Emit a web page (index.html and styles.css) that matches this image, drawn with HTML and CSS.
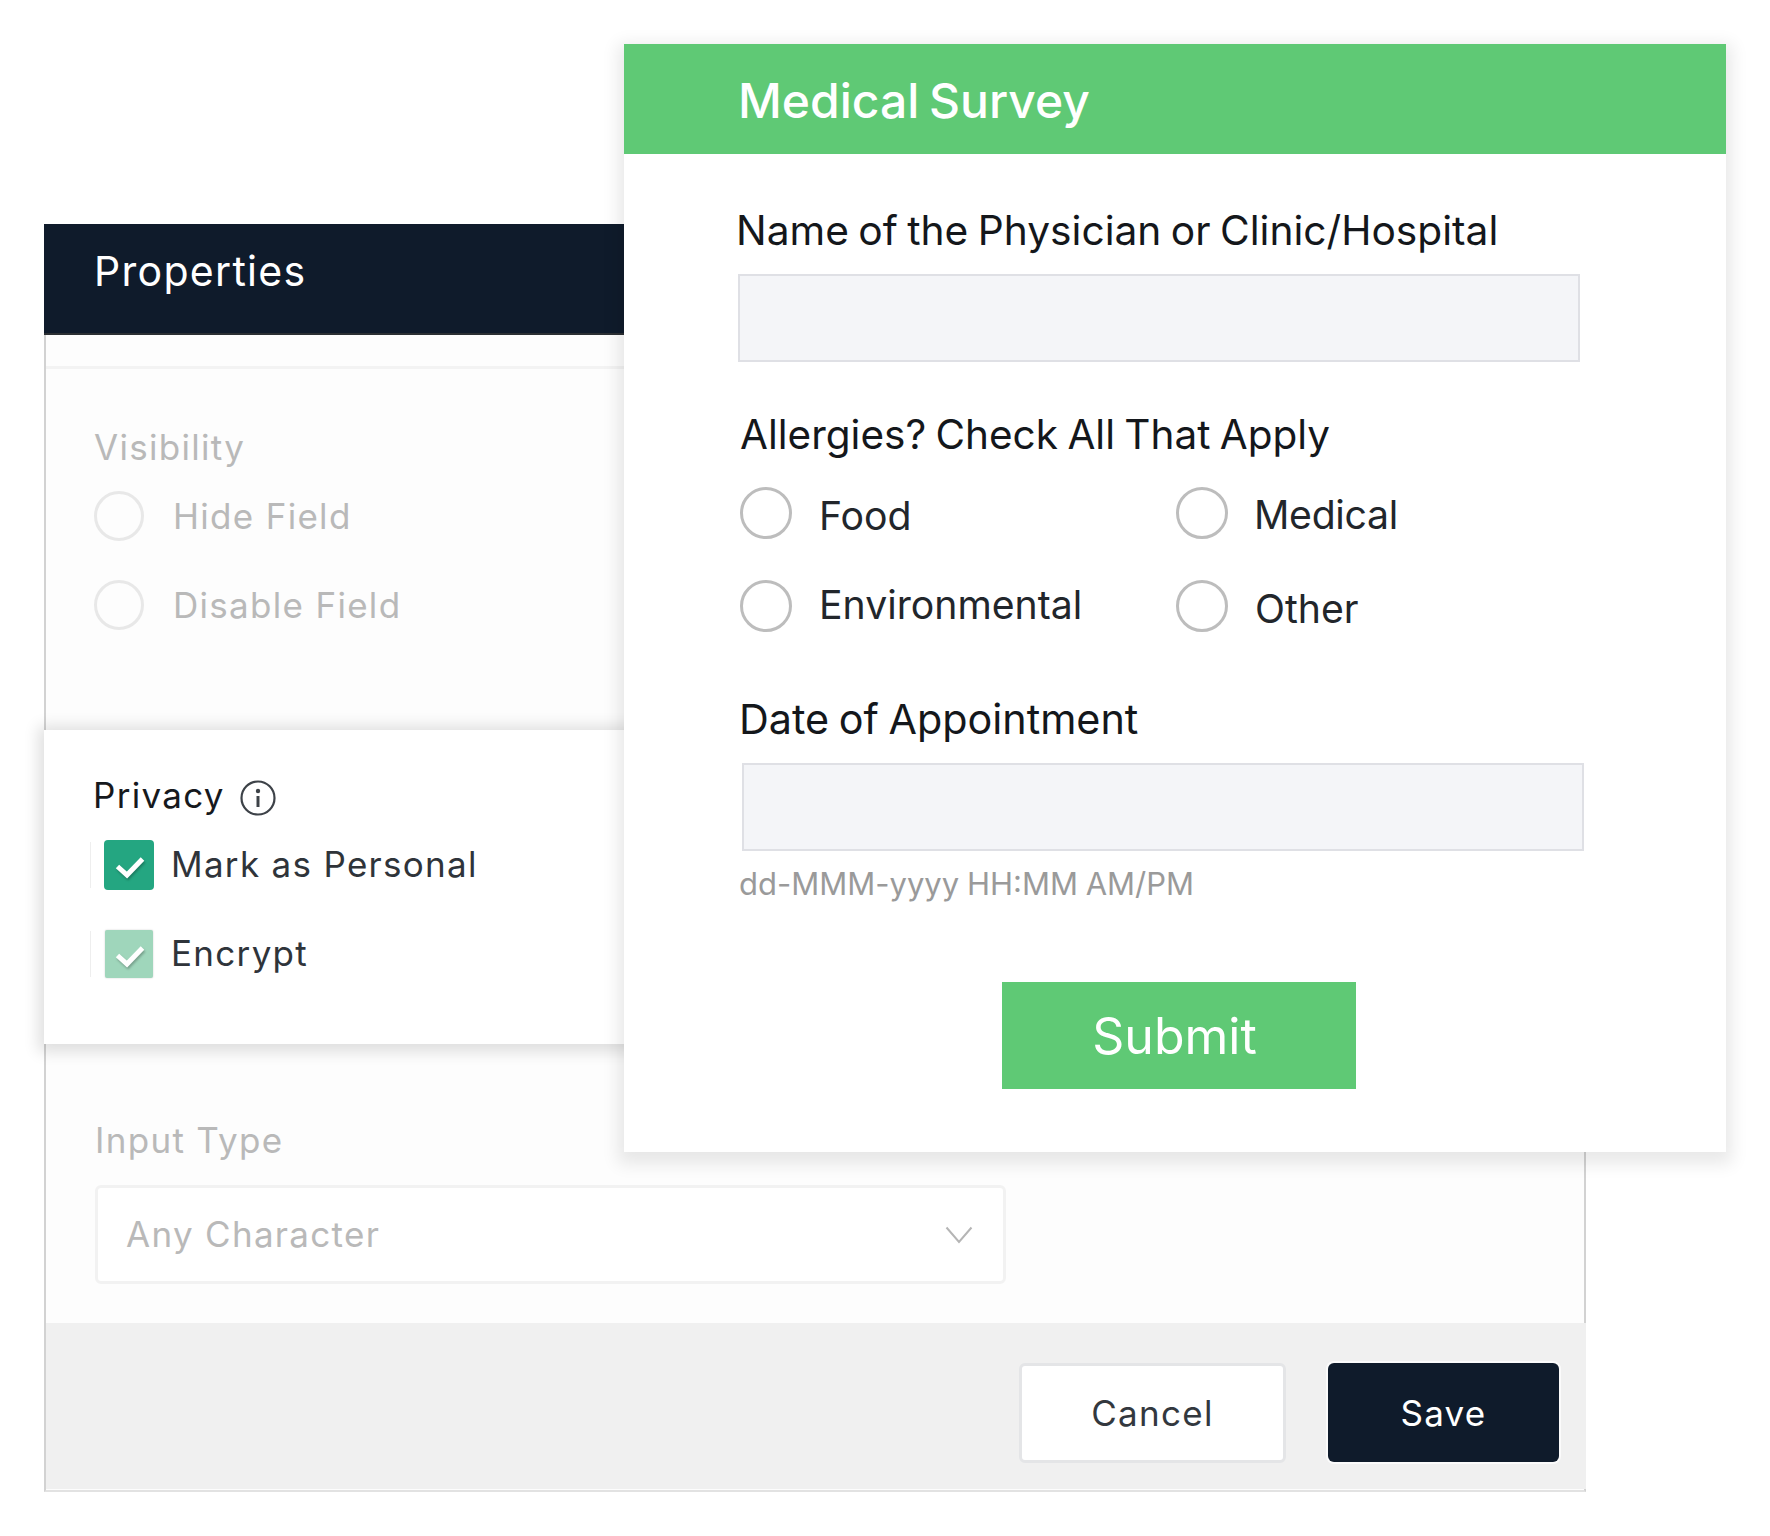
FILE: index.html
```html
<!DOCTYPE html>
<html lang="en">
<head>
    <meta charset="UTF-8">
    <meta name="viewport" content="width=device-width, initial-scale=1.0">
    <title>Medical Survey</title>
    <link rel="stylesheet" href="styles.css">
</head>
<body>
    <div class="stage">
        <!-- properties window, sits behind the survey -->
        <section class="panel">
            <h2 class="panel-title">Properties</h2>
            <div class="visibility">
                <div class="rule"></div>
                <h3 class="legend muted">Visibility</h3>
                <div class="option"><span class="dot"></span><span class="muted">Hide Field</span></div>
                <div class="option"><span class="dot"></span><span class="muted">Disable Field</span></div>
            </div>

            <div class="privacy">
                <h3 class="legend">Privacy
                    <svg class="info" viewBox="0 0 36 36" width="36" height="36">
                        <circle cx="18" cy="18" r="16.5" fill="none" stroke="#3d4248" stroke-width="2.2"/>
                        <circle cx="18" cy="11" r="2.2" fill="#3d4248"/>
                        <path d="M18 16v11" stroke="#3d4248" stroke-width="3"/>
                    </svg>
                </h3>
                <div class="option check-row">
                    <span class="box">
                        <svg viewBox="0 0 50 50" width="50" height="50"><path d="M13.500 26.500L23 35l15.500-16" fill="none" stroke="#fff" stroke-width="5"/></svg>
                    </span>
                    <span class="check-text">Mark as Personal</span>
                </div>
                <div class="option check-row">
                    <span class="box box-light">
                        <svg viewBox="0 0 48 48" width="48" height="48"><path d="M12.500 25.500L22 34l15.500-16" fill="none" stroke="#fff" stroke-width="5"/></svg>
                    </span>
                    <span class="check-text">Encrypt</span>
                </div>
            </div>

            <div class="input-type">
                <h3 class="legend muted">Input Type</h3>
                <div class="select">
                    <span class="muted select-text">Any Character</span>
                    <svg viewBox="0 0 28 18" width="28" height="18"><path d="M1.500 1.500L14 16 26.500 1.500" fill="none" stroke="#b5b5b5" stroke-width="2"/></svg>
                </div>
            </div>

            <div class="panel-footer">
                <button class="btn btn-cancel">Cancel</button>
                <button class="btn btn-save">Save</button>
            </div>
        </section>

        <!-- survey form -->
        <section class="survey">
            <h1 class="survey-title">Medical Survey</h1>
            <div class="survey-body">
                <label class="field-label physician">Name of the Physician or Clinic/Hospital</label>
                <div class="text-input"></div>

                <label class="field-label allergies">Allergies? Check All That Apply</label>
                <div class="radio-grid">
                    <div class="radio-item"><span class="radio"></span><span class="lower">Food</span></div>
                    <div class="radio-item"><span class="radio"></span><span class="medical">Medical</span></div>
                    <div class="radio-item"><span class="radio"></span><span class="higher">Environmental</span></div>
                    <div class="radio-item"><span class="radio"></span><span class="lower">Other</span></div>
                </div>

                <label class="field-label date">Date of Appointment</label>
                <div class="text-input date-input"></div>
                <p class="hint">dd-MMM-yyyy HH:MM AM/PM</p>

                <button class="submit">Submit</button>
            </div>
        </section>
    </div>
</body>
</html>
```

FILE: styles.css
```css
* {
    box-sizing: border-box;
}
body {
    margin: 0;
    background-color: #fff;
    font-family: Inter, "Liberation Sans", sans-serif;
}
h1, h2, h3, p {
    margin: 0;
    font-weight: 400;
}
.stage {
    position: relative;
    width: 1770px;
    height: 1536px;
    overflow: hidden;
}

/* properties window */
.panel {
    position: absolute;
    left: 44px;
    top: 224px;
    width: 1542px;
    height: 1268px;
    border-left: 2px solid #d2d2d2;
    border-right: 2px solid #d2d2d2;
    border-bottom: 2px solid #e2e2e2;
    background-color: #fdfdfd;
    font-size: 35px;
    letter-spacing: 1.3px;
    color: #2f343a;
}
.panel-title {
    height: 111px;
    margin: 0 -2px;
    padding: 22px 50px 0;
    background-color: #0f1b2b;
    border-bottom: 2px solid #2b2f33;
    color: #fff;
    font-size: 41px;
    line-height: 50px;
}
.rule {
    height: 3px;
    background-color: #f3f3f3;
}
.legend {
    display: flex;
    align-items: center;
    font-size: 35px;
    line-height: 44px;
}
.muted {
    color: #b9b9b9;
}
.visibility {
    height: 395px;
    padding-top: 31px;
}
.visibility .legend {
    margin: 56px 0 22px 48px;
}
.visibility .option {
    margin-left: 48px;
}
.option {
    display: flex;
    align-items: center;
    height: 50px;
    line-height: 50px;
    margin-bottom: 39px;
}
.dot {
    width: 50px;
    height: 50px;
    margin-right: 29px;
    border: 3px solid #e8e8e8;
    border-radius: 50%;
}
.privacy {
    height: 314px;
    margin-left: -2px;
    padding: 43px 0 0 49px;
    background-color: #fff;
    box-shadow: 0 2px 14px 6px rgba(0, 0, 0, 0.12);
    position: relative;
}
.privacy .legend {
    margin-bottom: 23px;
    color: #16191d;
}
.info {
    margin-left: 15px;
    margin-top: 6px;
}
.check-row {
    position: relative;
    padding-left: 11px;
}
.check-row::before {
    content: "";
    position: absolute;
    left: -3px;
    top: 2px;
    width: 1px;
    height: 46px;
    background-color: #eeeeee;
}
.check-text {
    padding-bottom: 3px;
}
.box {
    width: 50px;
    height: 50px;
    margin-right: 17px;
    border-radius: 4px;
    background-color: #24a681;
}
.box svg {
    display: block;
    filter: drop-shadow(1px 2px 1px rgba(0, 0, 0, 0.25));
}
.box-light {
    width: 48px;
    height: 48px;
    margin-left: 1px;
    margin-right: 18px;
    border-radius: 2px;
    background-color: #9fd6bb;
    box-shadow: 0 0 2px rgba(0, 0, 0, 0.2);
}
.input-type {
    height: 279px;
    padding: 74px 0 0 49px;
}
.input-type .legend {
    margin-bottom: 23px;
}
.select {
    display: flex;
    align-items: center;
    justify-content: space-between;
    width: 911px;
    height: 99px;
    padding: 0 30px 0 28px;
    background-color: #fff;
    border: 3px solid #f2f2f2;
    border-radius: 6px;
}
.select-text {
    padding-bottom: 2px;
}
.panel-footer {
    display: flex;
    justify-content: flex-end;
    gap: 42px;
    height: 166px;
    margin-right: -2px;
    padding: 40px 27px 0 0;
    background-color: #f0f0f0;
}
.btn {
    font-family: inherit;
    font-size: 35px;
    letter-spacing: 1.3px;
    border-radius: 6px;
}
.btn-cancel {
    width: 267px;
    height: 100px;
    padding-top: 1px;
    background-color: #fff;
    border: 3px solid #e4e5e7;
    color: #33383e;
}
.btn-save {
    width: 231px;
    height: 99px;
    background-color: #0f1b2b;
    border: none;
    box-shadow: 0 0 0 2px #fbfbfb;
    color: #fff;
}

/* survey form */
.survey {
    position: absolute;
    left: 624px;
    top: 44px;
    width: 1102px;
    height: 1108px;
    background-color: #fff;
    box-shadow: 0 6px 16px 6px rgba(0, 0, 0, 0.09);
    color: #14171b;
}
.survey-title {
    height: 110px;
    padding: 27px 114px 0;
    background-color: #5fc975;
    color: #fff;
    font-size: 48px;
    font-weight: 500;
    line-height: 60px;
    word-spacing: -3px;
}
.survey-body {
    padding: 0 0 0 114px;
}
.field-label {
    display: block;
    padding-top: 52px;
    font-size: 40.500px;
    line-height: 50px;
    word-spacing: -2px;
}
.physician {
    margin-left: -2px;
    font-size: 40.700px;
}
.text-input {
    width: 842px;
    height: 88px;
    margin-top: 18px;
    background-color: #f4f5f8;
    border: 2px solid #dfe0e5;
}
.allergies {
    padding: 48px 0 0 2px;
}
.radio-grid {
    display: grid;
    grid-template-columns: 436px 436px;
    row-gap: 41px;
    margin: 27px 0 0 2px;
}
.radio-item {
    display: flex;
    align-items: center;
    height: 52px;
    font-size: 39.200px;
    color: #22262b;
}
.radio {
    width: 52px;
    height: 52px;
    margin-right: 27px;
    border: 3px solid #bdbdbd;
    border-radius: 50%;
}
.lower {
    padding-top: 5px;
}
.medical {
    padding-top: 3px;
    margin-left: -1px;
    letter-spacing: -0.300px;
}
.higher {
    padding-bottom: 4px;
}
.date {
    padding: 62px 0 0 1px;
    font-size: 41.300px;
}
.date-input {
    width: 842px;
    height: 88px;
    margin: 19px 0 0 4px;
}
.hint {
    margin: 12px 0 0 1px;
    font-size: 31px;
    line-height: 42px;
    color: #9a9a9a;
    word-spacing: -1px;
}
.submit {
    display: block;
    width: 354px;
    height: 107px;
    margin: 77px 0 0 264px;
    padding: 0 9px 0 0;
    background-color: #5fc975;
    border: none;
    color: #fff;
    font-family: inherit;
    font-size: 50px;
}
```
